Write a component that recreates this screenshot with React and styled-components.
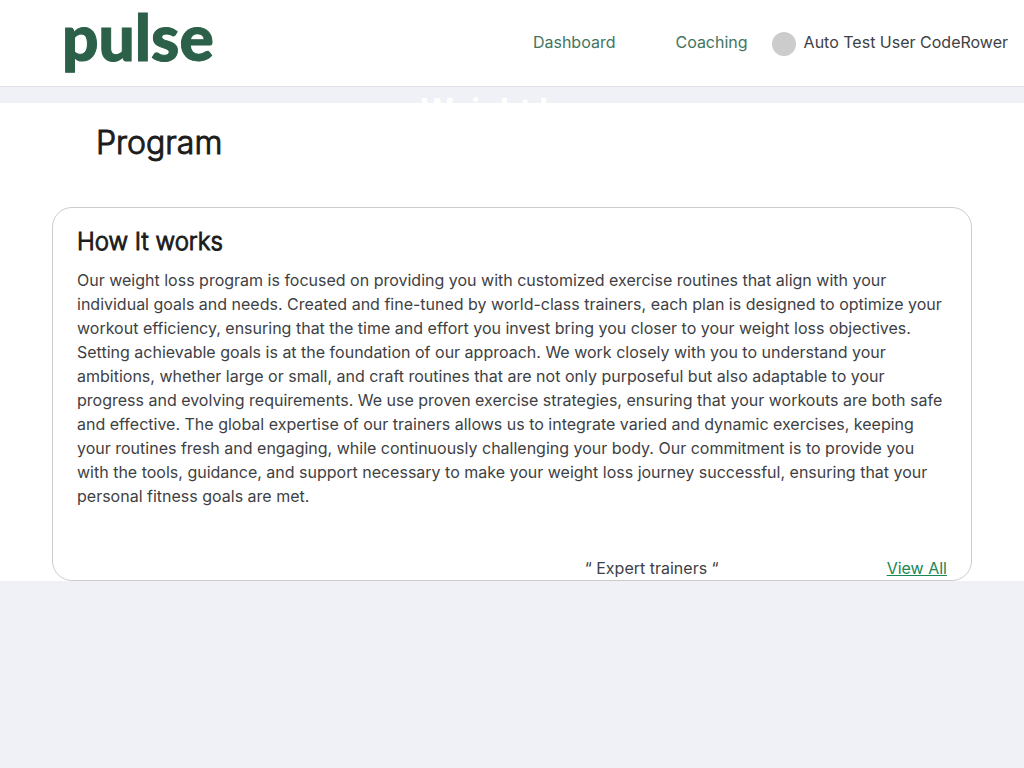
import React from "react";
import styled, { createGlobalStyle } from "styled-components";

const GlobalStyle = createGlobalStyle`
  * { box-sizing: border-box; }
  body {
    margin: 0;
    background: #f0f1f6;
    color: #3e4144;
    font-family: Inter, "Liberation Sans", sans-serif;
    font-size: 16px;
    font-weight: 400;
    line-height: 24px;
  }
`;

const Header = styled.header`
  display: flex;
  align-items: center;
  justify-content: space-between;
  height: 87px;
  padding: 0 16px 2px 62px;
  background: #fff;
  border-bottom: 1px solid #dee2e6;
`;

const Logo = styled.a`
  padding-bottom: 10px;
  color: #2c6048;
  font-family: Lato, sans-serif;
  font-size: 64px;
  font-weight: 900;
  line-height: 72px;
  text-decoration: none;
  -webkit-text-stroke: 1px #2c6048;
`;

const Nav = styled.nav`
  display: flex;
  align-items: center;
`;

const NavLink = styled.a`
  margin-right: ${({ $gap }) => $gap}px;
  color: #43755e;
  text-decoration: none;
`;

const User = styled.div`
  display: flex;
  align-items: center;
  gap: 8px;
`;

const Avatar = styled.span`
  width: 24px;
  height: 24px;
  margin-top: 3px;
  border-radius: 50%;
  background: #ccc;
`;

const Banner = styled.div`
  height: 16px;
  overflow: hidden;
  color: #fff;
  font-size: 32px;
  font-weight: 700;
  line-height: 48px;
  text-align: center;
`;

const Main = styled.main`
  padding: 16px 52px 0;
  background: #fff;
`;

const Title = styled.h1`
  margin: 0 44px 40px;
  color: #1c1c1c;
  font-size: 32px;
  font-weight: 300;
  line-height: 48px;
  -webkit-text-stroke: 1px #1c1c1c;
`;

const Card = styled.section`
  padding: 16px 24px 0;
  border: 1px solid #ccc;
  border-radius: 20px;
`;

const CardTitle = styled.h2`
  margin: 0 0 8px;
  color: #1c1c1c;
  font-size: 24px;
  font-weight: 300;
  line-height: 36px;
  -webkit-text-stroke: 1px #1c1c1c;
`;

const Text = styled.p`
  margin: 0 0 48px;
`;

const CardFooter = styled.div`
  display: flex;
  justify-content: flex-end;
  gap: 168px;
`;

const ViewAll = styled.a`
  color: #198754;
`;

export default function App() {
  return (
    <>
      <GlobalStyle />
      <Header>
        <Logo href="#">pulse</Logo>
        <Nav>
          <NavLink href="#" $gap={60}>Dashboard</NavLink>
          <NavLink href="#" $gap={24}>Coaching</NavLink>
          <User>
            <Avatar />
            <span>Auto Test User CodeRower</span>
          </User>
        </Nav>
      </Header>
      <Banner>Weight loss</Banner>
      <Main>
        <Title>Program</Title>
        <Card>
          <CardTitle>How It works</CardTitle>
          <Text>
            Our weight loss program is focused on providing you with customized
            exercise routines that align with your individual goals and needs.
            Created and fine-tuned by world-class trainers, each plan is
            designed to optimize your workout efficiency, ensuring that the time
            and effort you invest bring you closer to your weight loss
            objectives. Setting achievable goals is at the foundation of our
            approach. We work closely with you to understand your ambitions,
            whether large or small, and craft routines that are not only
            purposeful but also adaptable to your progress and evolving
            requirements. We use proven exercise strategies, ensuring that your
            workouts are both safe and effective. The global expertise of our
            trainers allows us to integrate varied and dynamic exercises,
            keeping your routines fresh and engaging, while continuously
            challenging your body. Our commitment is to provide you with the
            tools, guidance, and support necessary to make your weight loss
            journey successful, ensuring that your personal fitness goals are
            met.
          </Text>
          <CardFooter>
            <span>“ Expert trainers “</span>
            <ViewAll href="#">View All</ViewAll>
          </CardFooter>
        </Card>
      </Main>
    </>
  );
}
